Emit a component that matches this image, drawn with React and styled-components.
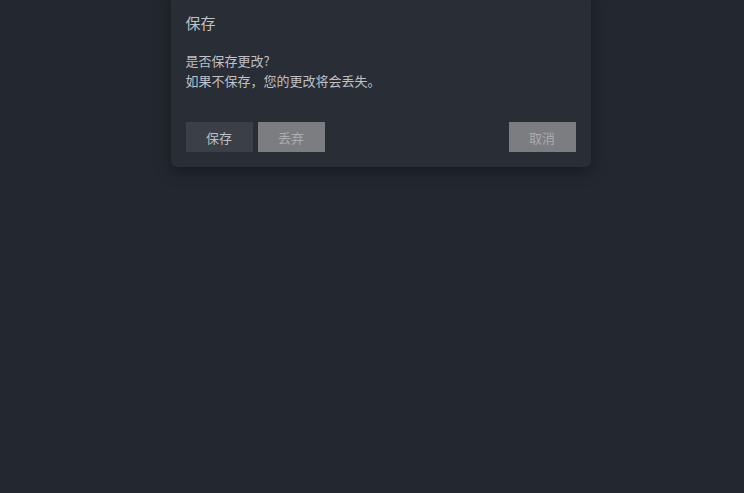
import React from 'react';
import styled, { createGlobalStyle } from 'styled-components';

const GlobalStyle = createGlobalStyle`
  html, body {
    margin: 0;
    padding: 0;
    height: 100%;
    background: #23272f;
  }
  #root {
    height: 100%;
  }
  body {
    font-family: "Noto Sans CJK SC", "Noto Sans", sans-serif;
  }
`;

const Page = styled.div`
  display: flex;
  justify-content: center;
  align-items: flex-start;
  width: 100%;
  height: 100%;
  overflow: hidden;
  background: #23272f;
`;

const Dialog = styled.div`
  width: 420px;
  margin-top: -10px;
  margin-left: 17px;
  padding: 22px 15px 15px 15px;
  box-sizing: border-box;
  background: #292d36;
  border-radius: 6px;
  box-shadow: 0 4px 16px rgba(0, 0, 0, 0.35);
  display: flex;
  flex-direction: column;
`;

const Title = styled.h3`
  margin: 0;
  font-size: 15px;
  font-weight: 400;
  line-height: 22px;
  color: #bfc1c5;
`;

const Body = styled.div`
  margin-top: 17px;
  font-size: 13px;
  line-height: 20px;
  color: #bfc1c5;
`;

const Line = styled.p`
  margin: 0;
`;

const Footer = styled.div`
  display: flex;
  align-items: center;
  gap: 5px;
  margin-top: 31px;
`;

const Button = styled.button`
  width: 67px;
  height: 30px;
  border: none;
  border-radius: 0;
  padding: 0;
  font-family: inherit;
  font-size: 13px;
  cursor: pointer;
  background: ${(props) => (props.primary ? '#3a3f48' : '#7c7d80')};
  color: ${(props) => (props.primary ? '#bcbec2' : '#a9abaf')};
  margin-left: ${(props) => (props.pushRight ? 'auto' : '0')};
`;

const App = () => {
  return (
    <>
      <GlobalStyle />
      <Page>
        <Dialog>
          <Title>保存</Title>
          <Body>
            <Line>是否保存更改?</Line>
            <Line>如果不保存，您的更改将会丢失。</Line>
          </Body>
          <Footer>
            <Button primary>保存</Button>
            <Button>丢弃</Button>
            <Button pushRight>取消</Button>
          </Footer>
        </Dialog>
      </Page>
    </>
  );
};

export default App;
